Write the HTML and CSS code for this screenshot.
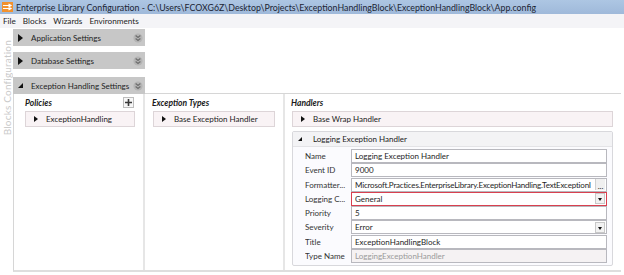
FILE: index.html
```html
<!DOCTYPE html>
<html>
<head>
<meta charset="utf-8">
<link rel="stylesheet" href="styles.css">
</head>
<body>
<div class="window">
  <div class="titlebar">
    <svg class="appicon" width="11" height="10" viewBox="0 0 11 10"><rect x="0" y="0" width="11" height="10" fill="#f2912e"/><path d="M1 3.5H8M1 6.5H8M6.5 2L9 3.5L6.5 5M6.5 5L9 6.5L6.5 8" stroke="#fff" stroke-width="1.2" fill="none"/></svg>
    <span class="title">Enterprise Library Configuration - C:\Users\FCOXG6Z\Desktop\Projects\ExceptionHandlingBlock\ExceptionHandlingBlock\App.config</span>
  </div>
  <div class="menubar"><span>File</span><span>Blocks</span><span>Wizards</span><span>Environments</span></div>
  <div class="main">
    <div class="sidebar"><span class="vtext">Blocks Configuration</span></div>
    <div class="blocks">
      <div class="section-head">
        <span class="tri-right"></span><span class="sh-label">Application Settings</span>
        <svg class="chev" width="10" height="10" viewBox="0 0 10 10"><circle cx="5" cy="5" r="4.6" fill="#b4b4b4"/><path d="M2.6 2.4L5 4.4L7.4 2.4M2.6 5.4L5 7.4L7.4 5.4" stroke="#6f6f6f" stroke-width="1.3" fill="none"/></svg>
      </div>
      <div class="section-head">
        <span class="tri-right"></span><span class="sh-label">Database Settings</span>
        <svg class="chev" width="10" height="10" viewBox="0 0 10 10"><circle cx="5" cy="5" r="4.6" fill="#b4b4b4"/><path d="M2.6 2.4L5 4.4L7.4 2.4M2.6 5.4L5 7.4L7.4 5.4" stroke="#6f6f6f" stroke-width="1.3" fill="none"/></svg>
      </div>
      <div class="expanded">
        <div class="head-row">
          <div class="section-head">
            <span class="tri-open"></span><span class="sh-label">Exception Handling Settings</span>
            <svg class="chev" width="10" height="10" viewBox="0 0 10 10"><circle cx="5" cy="5" r="4.6" fill="#b4b4b4"/><path d="M2.6 2.4L5 4.4L7.4 2.4M2.6 5.4L5 7.4L7.4 5.4" stroke="#6f6f6f" stroke-width="1.3" fill="none"/></svg>
          </div>
          <div class="head-line"></div>
        </div>
        <div class="panel">
          <div class="col col-policies">
            <div class="col-head"><span class="col-title">Policies</span>
              <span class="addbtn"><svg width="9" height="9" viewBox="0 0 9 9"><path d="M4.5 1V8M1 4.5H8" stroke="#3a3a3a" stroke-width="1.6"/></svg></span>
            </div>
            <div class="item"><span class="tri-small"></span>ExceptionHandling</div>
          </div>
          <div class="col col-types">
            <div class="col-head"><span class="col-title">Exception Types</span></div>
            <div class="item"><span class="tri-small"></span>Base Exception Handler</div>
          </div>
          <div class="col col-handlers">
            <div class="col-head"><span class="col-title">Handlers</span></div>
            <div class="item"><span class="tri-small"></span>Base Wrap Handler</div>
            <div class="handler-box">
              <div class="hb-head"><span class="tri-open small"></span>Logging Exception Handler</div>
              <div class="props">
                <div class="plabel">Name</div><div class="pval">Logging Exception Handler</div>
                <div class="plabel">Event ID</div><div class="pval">9000</div>
                <div class="plabel">Formatter...</div><div class="pval has-btn"><span class="vt tight">Microsoft.Practices.EnterpriseLibrary.ExceptionHandling.TextExceptionI</span><span class="ellipsis">...</span></div>
                <div class="plabel">Logging C...</div><div class="pval has-btn err"><span class="vt">General</span><span class="ddbtn"></span></div>
                <div class="plabel">Priority</div><div class="pval">5</div>
                <div class="plabel">Severity</div><div class="pval has-btn"><span class="vt">Error</span><span class="ddbtn"></span></div>
                <div class="plabel">Title</div><div class="pval">ExceptionHandlingBlock</div>
                <div class="plabel">Type Name</div><div class="pval ro">LoggingExceptionHandler</div>
              </div>
            </div>
          </div>
        </div>
      </div>
    </div>
  </div>
</div>
</body>
</html>
```

FILE: styles.css
```css
* { box-sizing: border-box; }
html, body { margin: 0; padding: 0; background: #ffffff; }
body {
  width: 624px;
  height: 275px;
  overflow: hidden;
  font-family: Lato, "Noto Sans", sans-serif;
  font-size: 8px;
  color: #1e1e1e;
}
.window { width: 624px; height: 275px; display: flex; flex-direction: column; }

.titlebar {
  height: 14px;
  background: linear-gradient(#adc6e3, #9fb9da);
  display: flex;
  align-items: center;
  padding-left: 2px;
  gap: 3px;
  color: #1b2433;
  font-size: 8.8px;
  white-space: nowrap;
}
.appicon { flex: none; }

.menubar {
  height: 14px;
  background: #f4f4f7;
  display: flex;
  align-items: center;
  gap: 7px;
  padding-left: 3px;
  font-size: 8.2px;
  color: #1e1e1e;
}

.main { flex: 1; display: flex; min-height: 0; }
.sidebar {
  width: 13px;
  flex: none;
  display: flex;
  flex-direction: column;
  align-items: center;
  padding-top: 12px;
}
.vtext {
  writing-mode: vertical-rl;
  transform: rotate(180deg);
  color: #cacaca;
  font-size: 10px;
  letter-spacing: 0.2px;
  white-space: nowrap;
}

.blocks { flex: 1; display: flex; flex-direction: column; gap: 6px; padding-top: 1px; padding-right: 3px; }

.section-head {
  width: 132px;
  height: 17px;
  background: #c7c7c7;
  display: flex;
  align-items: center;
  padding-left: 5px;
  padding-right: 2px;
  color: #1e1e1e;
  font-size: 8px;
  flex: none;
}
.sh-label { flex: 1; padding-left: 8px; white-space: nowrap; }
.chev { flex: none; }

.tri-right {
  width: 0; height: 0;
  border-top: 4px solid transparent;
  border-bottom: 4px solid transparent;
  border-left: 5px solid #111;
}
.tri-open {
  width: 0; height: 0;
  border-left: 5px solid transparent;
  border-bottom: 5px solid #111;
}
.tri-open.small { border-left-width: 4px; border-bottom-width: 4px; margin-right: 11px; margin-left: 5px; }

.expanded { display: flex; flex-direction: column; flex: 1; margin-top: 2px; }
.head-row { display: flex; align-items: flex-end; }
.head-line { flex: 1; height: 1px; background: #d6d6d6; }

.panel {
  flex: 1;
  display: flex;
  border-left: 1px solid #d6d6d6;
  border-bottom: 2px solid #dedede;
  margin-bottom: 3px;
}
.col { display: flex; flex-direction: column; }
.col-policies { width: 131px; padding: 0 8px 0 11px; border-right: 2px solid #e6e6e6; }
.col-types { width: 140px; padding: 0 8px 0 7px; border-right: 2px solid #e6e6e6; }
.col-handlers { flex: 1; padding: 0 8px 0 6px; }

.col-head {
  height: 15px;
  display: flex;
  align-items: center;
  justify-content: space-between;
  margin-top: 1px;
  margin-bottom: 1px;
}
.col-title { font-weight: bold; font-style: italic; font-size: 8.5px; color: #1a1a1a; }
.addbtn {
  width: 11px; height: 11px;
  border: 1px solid #bdbdbd;
  background: #f7f7f7;
  display: flex; align-items: center; justify-content: center;
  margin-right: 1px;
}

.item {
  height: 16px;
  background: #f9f3f5;
  border: 1px solid #ddd5d8;
  display: flex;
  align-items: center;
  padding-left: 8px;
  color: #222;
  font-size: 8px;
  white-space: nowrap;
}
.col-types .item { margin-left: 1px; }
.col-handlers .item { margin-left: 1px; margin-bottom: 4px; }
.tri-small {
  width: 0; height: 0;
  border-top: 3.5px solid transparent;
  border-bottom: 3.5px solid transparent;
  border-left: 4px solid #111;
  margin-right: 8px;
}

.handler-box {
  margin-left: 1px;
  border: 1px solid #d8d8dc;
  border-radius: 2px;
  background: #fbfbfe;
  height: 135px;
  display: flex;
  flex-direction: column;
}
.hb-head {
  height: 15px;
  background: #f3f3f5;
  border-bottom: 1px solid #e3e3e6;
  display: flex;
  align-items: center;
  font-size: 8px;
  color: #222;
}
.props {
  display: grid;
  grid-template-columns: 46px 1fr;
  grid-auto-rows: 14px;
  row-gap: 0.3px;
  padding: 2px 5px 0 12px;
}
.plabel { font-size: 8px; color: #333; display: flex; align-items: center; white-space: nowrap; overflow: hidden; }
.pval {
  height: 14px;
  border: 1px solid #b8b8be;
  background: #fff;
  display: flex;
  align-items: center;
  padding-left: 3px;
  font-size: 8px;
  color: #1e1e1e;
  white-space: nowrap;
  overflow: hidden;
  min-width: 0;
}
.pval.has-btn { padding-right: 1px; }
.vt { flex: 1; min-width: 0; overflow: hidden; }
.vt.tight { letter-spacing: -0.2px; margin-right: 1px; }
.pval.err { border-color: #d9404f; }
.pval.ro { background: #f5f2f3; color: #9a9a9a; }
.ellipsis {
  flex: none;
  width: 10px; height: 11px;
  display: flex; align-items: flex-end; justify-content: center;
  font-size: 8px; line-height: 8px; color: #222;
  background: #f0f0f0;
  border-left: 1px solid #d0d0d0;
}
.ddbtn {
  width: 10px; height: 11px;
  border: 1px solid #c8c8c8;
  background: #f2f2f2;
  position: relative;
  flex: none;
}
.ddbtn::after {
  content: "";
  position: absolute;
  left: 2px; top: 4px;
  border-left: 2.5px solid transparent;
  border-right: 2.5px solid transparent;
  border-top: 3px solid #111;
}
```
